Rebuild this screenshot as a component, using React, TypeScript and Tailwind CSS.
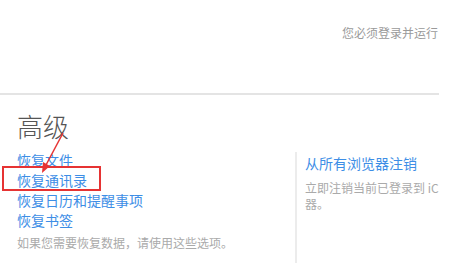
export default function App() {
  const links = ['恢复文件', '恢复通讯录', '恢复日历和提醒事项', '恢复书签'];

  return (
    <div
      className="relative w-[454px] h-[263px] bg-white overflow-hidden"
      style={{ fontFamily: '"Noto Sans CJK SC", "Noto Sans", sans-serif' }}
    >
      <div className="w-[439px] h-full overflow-hidden flex flex-col">
        {/* header */}
        <div className="h-[93px] shrink-0 pl-[342px] pt-[25px] whitespace-nowrap text-[12px] leading-[16px] text-[#9a9a9a]">
          您必须登录并运行 iCloud 才能使用此功能
        </div>
        <div className="h-[2px] shrink-0 bg-[#e4e4e4]" />

        {/* advanced */}
        <div className="flex-1 flex flex-col pl-[17px] pt-[15px]">
          <h2 className="text-[26px] leading-[32px] font-light text-[#555]">高级</h2>
          <div className="flex flex-1 mt-[8px]">
            <div className="w-[278px] shrink-0">
              {links.map((l) => (
                <div key={l} className="text-[14px] leading-[20px] text-[#3d8ee6] whitespace-nowrap">
                  {l}
                </div>
              ))}
              <p className="mt-[5px] text-[12px] leading-[16px] text-[#aaa] whitespace-nowrap">
                如果您需要恢复数据，请使用这些选项。
              </p>
            </div>
            <div className="flex-1 mt-[2px] border-l-2 border-[#ececec] pl-[8px] pt-[1px] whitespace-nowrap">
              <div className="text-[14px] leading-[20px] text-[#3d8ee6]">从所有浏览器注销</div>
              <div className="mt-[7px] text-[12px] leading-[16px] text-[#aaa]">
                <div>立即注销当前已登录到 iCloud 的所有浏览</div>
                <div>器。</div>
              </div>
            </div>
          </div>
        </div>
      </div>

      {/* annotation */}
      <div className="absolute left-[2px] top-[166px] w-[99px] h-[25px] border-2 border-[#e63333]" />
      <svg className="absolute left-0 top-0" width="454" height="263">
        <line x1="63" y1="133" x2="46" y2="165" stroke="#e63333" strokeWidth="1.5" />
        <polygon points="42,173 43,162 50,166" fill="#e63333" />
      </svg>
    </div>
  );
}
